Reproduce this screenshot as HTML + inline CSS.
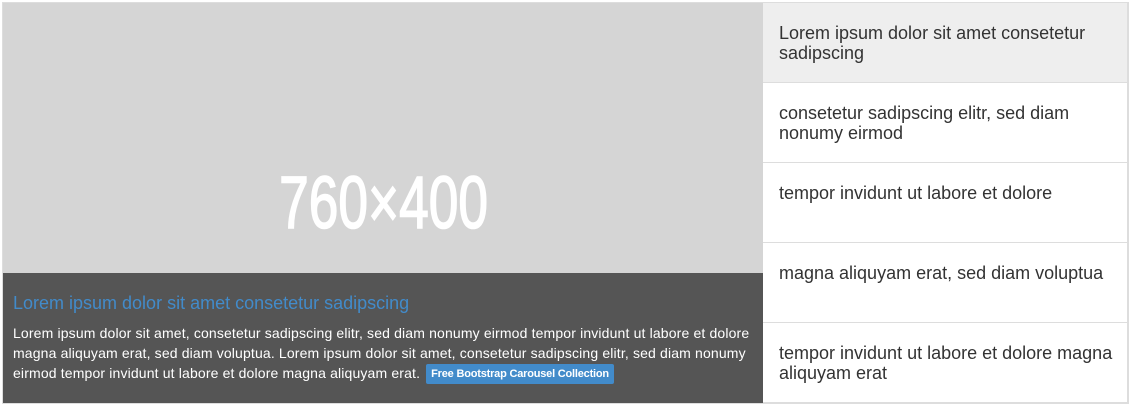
<!DOCTYPE html>
<html><head><meta charset="utf-8"><style>
*{margin:0;padding:0;box-sizing:border-box}
body{width:1132px;height:406px;background:#fff;font-family:"Liberation Sans",sans-serif;position:relative;overflow:hidden}
.wrap{position:absolute;left:2px;top:2px;width:1127px;height:402px;border:1px solid #ddd}
.img{position:absolute;left:3px;top:3px;width:760px;height:400px;background:#d5d5d5;overflow:hidden}
.big{position:absolute;left:0;width:760px;top:157px;text-align:center;color:#fff;font-size:74px;line-height:86px;transform:scaleX(0.72);transform-origin:382px 0;-webkit-text-stroke:1.6px #fff}
.cap{position:absolute;left:0;top:270px;width:760px;height:130px;background:#555;padding:0 10px}
.cap h4{color:#428bca;font-weight:normal;font-size:18px;margin-top:19px;line-height:22px}
.cap p{color:#fff;font-size:14px;line-height:20px;margin-top:9px;letter-spacing:0.15px}
.btn{display:inline-block;background:#428bca;color:#fff;font-size:11px;font-weight:bold;padding:0 5px;line-height:20px;border-radius:2px;vertical-align:1px;margin-left:2px;letter-spacing:-0.2px}
.list{position:absolute;left:763px;top:3px;width:365px}
.it{height:80px;border-bottom:1px solid #ddd;border-right:1px solid #ddd;padding:20px 8px 0 16px;font-size:18px;line-height:20px;color:#333}
.it.a{background:#eee}
</style></head><body>
<div class="wrap"></div>
<div class="img"><div class="big">760×400</div>
<div class="cap"><h4>Lorem ipsum dolor sit amet consetetur sadipscing</h4>
<p>Lorem ipsum dolor sit amet, consetetur sadipscing elitr, sed diam nonumy eirmod tempor invidunt ut labore et dolore magna aliquyam erat, sed diam voluptua. Lorem ipsum dolor sit amet, consetetur sadipscing elitr, sed diam nonumy eirmod tempor invidunt ut labore et dolore magna aliquyam erat. <span class="btn">Free Bootstrap Carousel Collection</span></p></div></div>
<div class="list">
<div class="it a">Lorem ipsum dolor sit amet consetetur sadipscing</div>
<div class="it">consetetur sadipscing elitr, sed diam nonumy eirmod</div>
<div class="it">tempor invidunt ut labore et dolore</div>
<div class="it">magna aliquyam erat, sed diam voluptua</div>
<div class="it">tempor invidunt ut labore et dolore magna aliquyam erat</div>
</div>
</body></html>
